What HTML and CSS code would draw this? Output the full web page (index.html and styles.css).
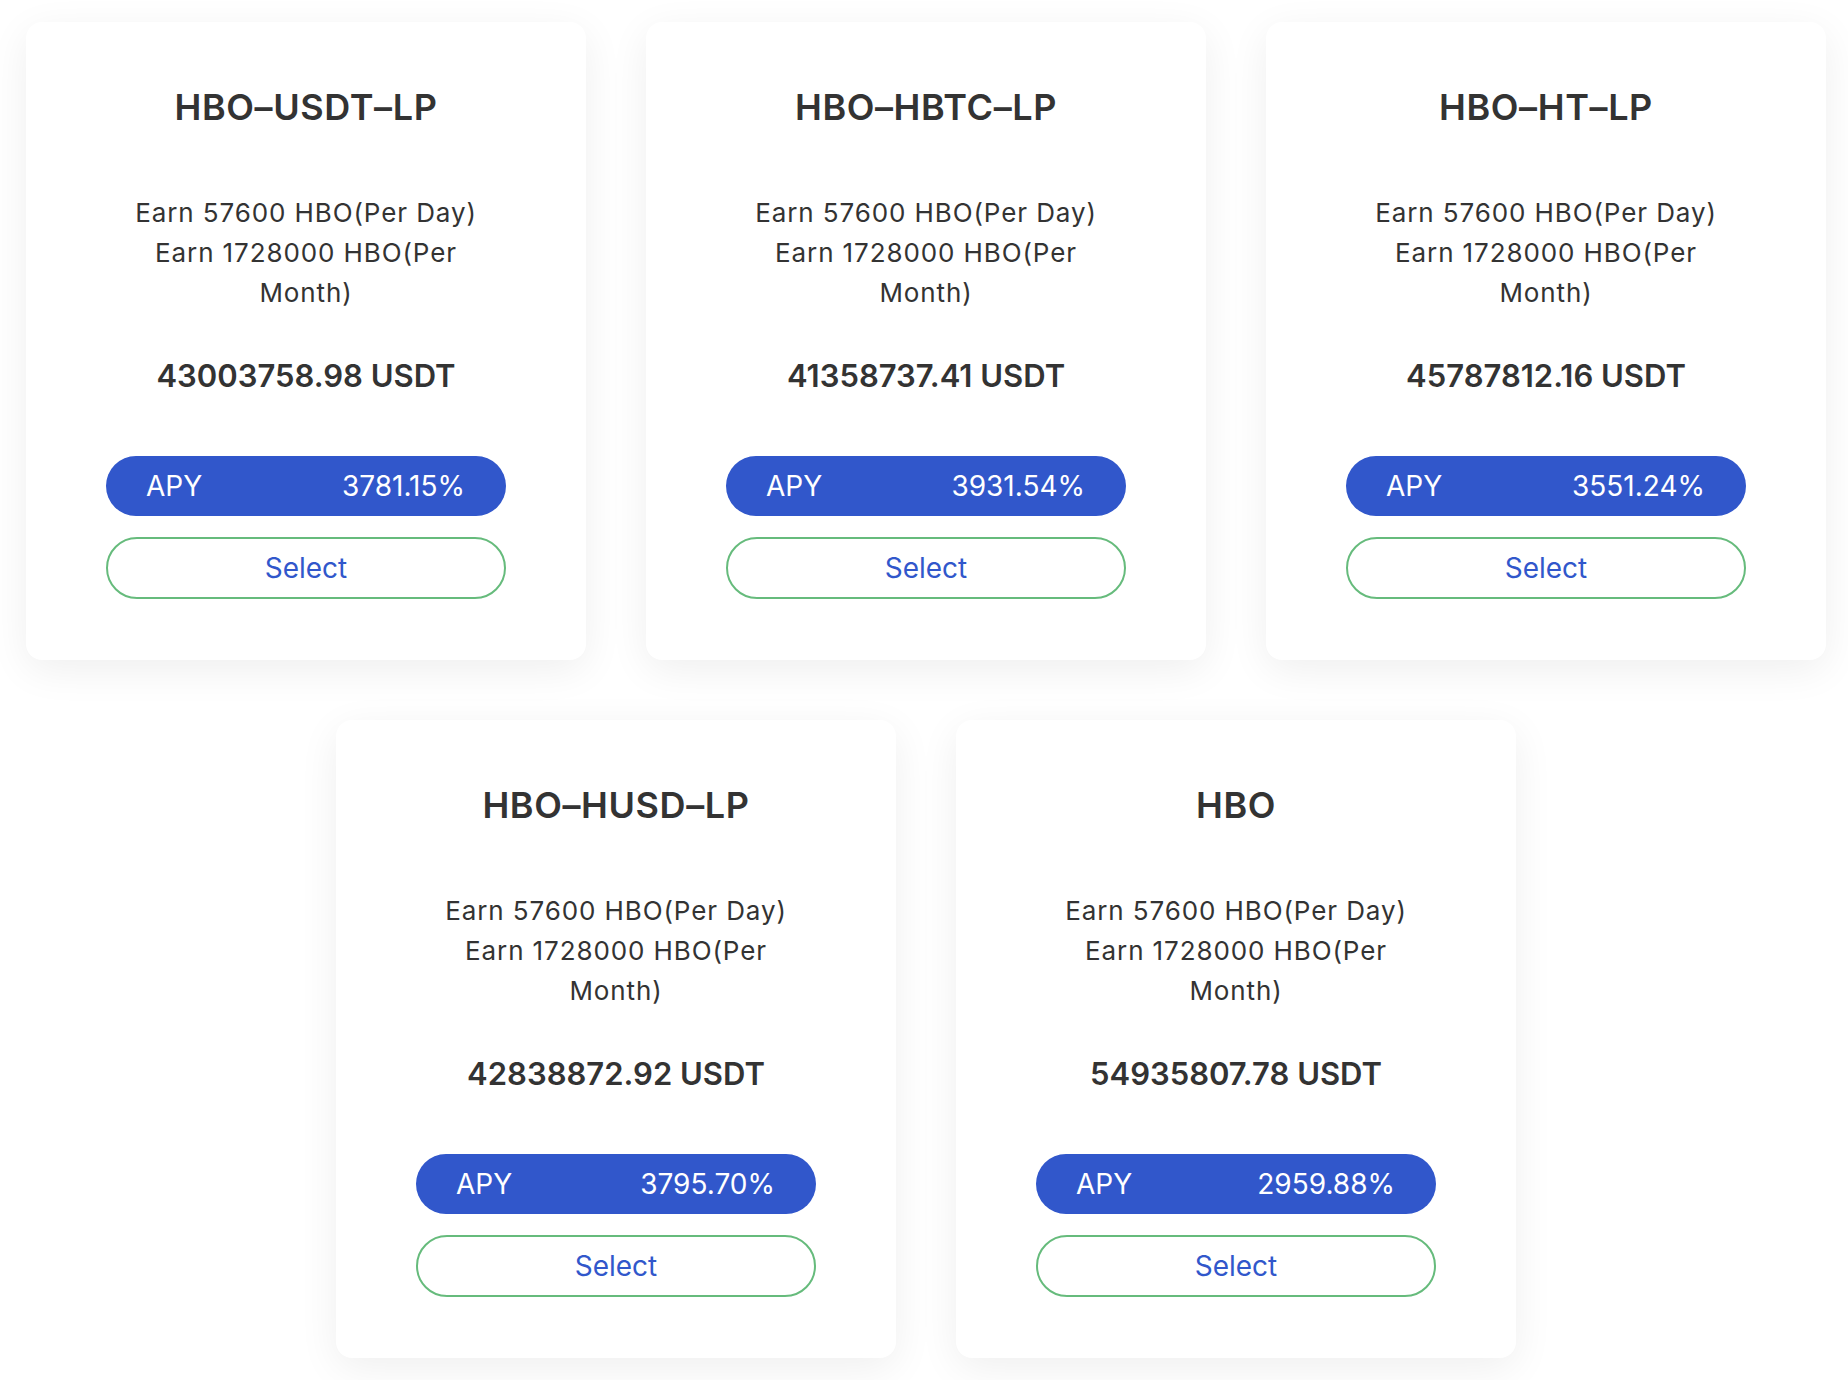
FILE: index.html
```html
<!DOCTYPE html>
<html lang="en">
<head>
<meta charset="utf-8">
<title>Pools</title>
<link rel="stylesheet" href="styles.css">
</head>
<body>
<div class="pools">
  <div class="card">
    <div class="title">HBO–USDT–LP</div>
    <div class="earn">Earn 57600 HBO(Per Day)<br>Earn 1728000 HBO(Per Month)</div>
    <div class="amount">43003758.98 USDT</div>
    <div class="apy"><span>APY</span><span>3781.15%</span></div>
    <button class="select">Select</button>
  </div>
  <div class="card">
    <div class="title">HBO–HBTC–LP</div>
    <div class="earn">Earn 57600 HBO(Per Day)<br>Earn 1728000 HBO(Per Month)</div>
    <div class="amount">41358737.41 USDT</div>
    <div class="apy"><span>APY</span><span>3931.54%</span></div>
    <button class="select">Select</button>
  </div>
  <div class="card">
    <div class="title">HBO–HT–LP</div>
    <div class="earn">Earn 57600 HBO(Per Day)<br>Earn 1728000 HBO(Per Month)</div>
    <div class="amount">45787812.16 USDT</div>
    <div class="apy"><span>APY</span><span>3551.24%</span></div>
    <button class="select">Select</button>
  </div>
  <div class="card">
    <div class="title">HBO–HUSD–LP</div>
    <div class="earn">Earn 57600 HBO(Per Day)<br>Earn 1728000 HBO(Per Month)</div>
    <div class="amount">42838872.92 USDT</div>
    <div class="apy"><span>APY</span><span>3795.70%</span></div>
    <button class="select">Select</button>
  </div>
  <div class="card">
    <div class="title">HBO</div>
    <div class="earn">Earn 57600 HBO(Per Day)<br>Earn 1728000 HBO(Per Month)</div>
    <div class="amount">54935807.78 USDT</div>
    <div class="apy"><span>APY</span><span>2959.88%</span></div>
    <button class="select">Select</button>
  </div>
</div>
</body>
</html>
```
FILE: styles.css
```css
* { box-sizing: border-box; }
html, body { margin: 0; padding: 0; background: #ffffff; }
body {
  font-family: Inter, "Noto Sans", "Liberation Sans", sans-serif;
  color: #333333;
}
.pools {
  display: flex;
  flex-wrap: wrap;
  justify-content: center;
  gap: 60px;
  padding: 22px 22px 22px 26px;
}
.card {
  width: 560px;
  height: 638px;
  background: #ffffff;
  border-radius: 16px;
  box-shadow: 0 10px 40px rgba(0, 0, 0, 0.065);
  padding: 60px 80px 61px;
  display: flex;
  flex-direction: column;
  align-items: center;
  text-align: center;
}
.title {
  font-size: 36px;
  font-weight: 600;
  line-height: 50px;
  letter-spacing: 0.6px;
  color: #333333;
}
.earn {
  margin-top: 61px;
  max-width: 380px;
  font-size: 26px;
  line-height: 40px;
  letter-spacing: 0.9px;
  color: #333333;
}
.amount {
  margin-top: 43px;
  font-size: 31px;
  font-weight: 600;
  line-height: 40px;
  color: #333333;
}
.apy {
  margin-top: 60px;
  width: 400px;
  height: 60px;
  border-radius: 30px;
  background: #3157cb;
  color: #ffffff;
  font-size: 28px;
  display: flex;
  align-items: center;
  justify-content: space-between;
  padding: 0 41px 0 40px;
}
.select {
  margin-top: 21px;
  width: 400px;
  height: 62px;
  border-radius: 31px;
  border: 2px solid #66bb7c;
  background: #ffffff;
  color: #3157cb;
  font-family: inherit;
  font-size: 28px;
  cursor: pointer;
}
```
